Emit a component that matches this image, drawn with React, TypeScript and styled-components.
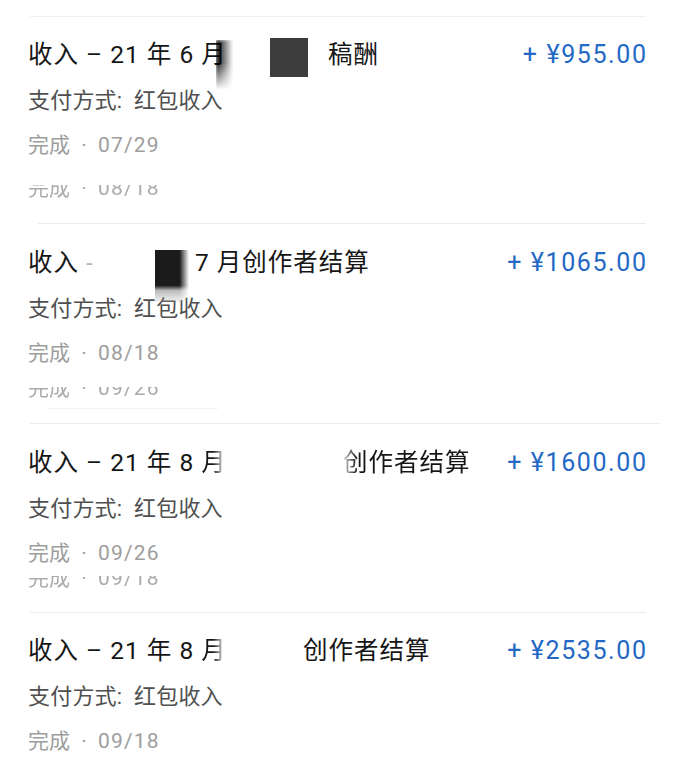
import React from "react";
import styled, { createGlobalStyle } from "styled-components";

const Global = createGlobalStyle`
  html, body { margin: 0; padding: 0; background: #ffffff; }
  body {
    font-family: Roboto, "Noto Sans CJK SC", "Noto Sans", sans-serif;
    -webkit-font-smoothing: antialiased;
  }
`;

const Page = styled.div`
  width: 674px;
  height: 771px;
  overflow: hidden;
  box-sizing: border-box;
  padding: 0 28px;
  display: flex;
  flex-direction: column;
  background: #fff;
`;

const Divider = styled.div<{ $mt: number; $l?: number; $r?: number; $c?: string }>`
  height: 1px;
  flex: none;
  margin-top: ${(p) => p.$mt}px;
  margin-left: ${(p) => p.$l ?? 2}px;
  margin-right: ${(p) => p.$r ?? 0}px;
  background: ${(p) => p.$c ?? "#ececec"};
`;

const Record = styled.div<{ $mt: number }>`
  display: flex;
  flex-direction: column;
  gap: 14px;
  margin-top: ${(p) => p.$mt}px;
  flex: none;
`;

const TitleRow = styled.div`
  position: relative;
  display: flex;
  align-items: center;
  height: 34px;
  font-size: 24.5px;
  line-height: 34px;
  color: #161616;
  white-space: pre;
`;

const Seg = styled.span<{ $w?: number; $fadeLeft?: boolean }>`
  display: inline-block;
  flex: none;
  letter-spacing: 1px;
  width: ${(p) => (p.$w ? `${p.$w}px` : "auto")};
  ${(p) =>
    p.$fadeLeft
      ? `-webkit-mask-image: linear-gradient(to right, rgba(0,0,0,0.15) 0px, #000 14px);
         mask-image: linear-gradient(to right, rgba(0,0,0,0.15) 0px, #000 14px);`
      : ""}
`;

const CutChar = styled.span`
  display: inline-block;
  -webkit-mask-image: linear-gradient(to right, #000 45%, transparent 95%);
  mask-image: linear-gradient(to right, #000 45%, transparent 95%);
`;

const Faded = styled.span`
  color: #b9b9b9;
`;

const Amount = styled.span`
  margin-left: auto;
  margin-right: -1.6px;
  color: #2468c6;
  font-size: 25px;
  letter-spacing: 1.6px;
`;

const Smear = styled.div<{ $x: number }>`
  position: absolute;
  left: ${(p) => p.$x}px;
  top: 2px;
  width: 17px;
  height: 50px;
  background: linear-gradient(to right, rgba(0, 0, 0, 0.95) 0%, rgba(0, 0, 0, 0.55) 45%, rgba(0, 0, 0, 0) 100%);
  -webkit-mask-image: linear-gradient(to bottom, #000 0%, #000 45%, transparent 100%);
  mask-image: linear-gradient(to bottom, #000 0%, #000 45%, transparent 100%);
  filter: blur(1.5px);
`;

const RedactBox = styled.div<{ $x: number; $y: number; $w: number; $h: number; $c: string }>`
  position: absolute;
  left: ${(p) => p.$x}px;
  top: ${(p) => p.$y}px;
  width: ${(p) => p.$w}px;
  height: ${(p) => p.$h}px;
  background: ${(p) => p.$c};
`;

const SoftRedact = styled.div<{ $x: number; $y: number }>`
  position: absolute;
  left: ${(p) => p.$x}px;
  top: ${(p) => p.$y}px;
  width: 34px;
  height: 52px;
  background: linear-gradient(
    to bottom,
    #1b1b1b 0%,
    #1b1b1b 68%,
    rgba(60, 60, 60, 0.35) 78%,
    rgba(200, 200, 200, 0.2) 100%
  );
  -webkit-mask-image: linear-gradient(to right, #000 0%, #000 72%, transparent 100%);
  mask-image: linear-gradient(to right, #000 0%, #000 72%, transparent 100%);
`;

const Sub = styled.div`
  height: 30px;
  line-height: 30px;
  font-size: 22px;
  color: #4f4f4f;
  white-space: pre;
  letter-spacing: 0.2px;
`;

const Colon = styled.span`
  margin-right: 6px;
`;

const DateLine = styled.div`
  height: 30px;
  line-height: 30px;
  font-size: 21px;
  color: #9d9d9d;
  white-space: pre;
`;

const Dot = styled.span`
  margin: 0 6px;
`;

const Num = styled.span`
  letter-spacing: 1.2px;
`;

const Fragment = styled.div<{ $mt: number; $h: number }>`
  flex: none;
  margin-top: ${(p) => p.$mt}px;
  height: ${(p) => p.$h}px;
  overflow: hidden;
  opacity: 0.85;
`;

const FragmentInner = styled(DateLine)<{ $shift: number }>`
  margin-top: ${(p) => -p.$shift}px;
`;

type Item = {
  mt: number;
  title: React.ReactNode;
  amount: string;
  date: string;
};

const items: Item[] = [
  {
    mt: 21,
    amount: "+ ¥955.00",
    date: "07/29",
    title: (
      <>
        <Seg $w={300}>收入 – 21 年 6 月</Seg>
        <Seg>稿酬</Seg>
        <Smear $x={188} />
        <RedactBox $x={242} $y={0} $w={38} $h={39} $c="#3d3d3d" />
      </>
    ),
  },
  {
    mt: 22,
    amount: "+ ¥1065.00",
    date: "08/18",
    title: (
      <>
        <Seg $w={167}>
          收入 <Faded>-</Faded>
        </Seg>
        <Seg>7 月创作者结算</Seg>
        <SoftRedact $x={127} $y={4} />
      </>
    ),
  },
  {
    mt: 22,
    amount: "+ ¥1600.00",
    date: "09/26",
    title: (
      <>
        <Seg $w={315}>
          收入 – 21 年 8 <CutChar>月</CutChar>
        </Seg>
        <Seg $fadeLeft>创作者结算</Seg>
      </>
    ),
  },
  {
    mt: 21,
    amount: "+ ¥2535.00",
    date: "09/18",
    title: (
      <>
        <Seg $w={275}>
          收入 – 21 年 8 <CutChar>月</CutChar>
        </Seg>
        <Seg>创作者结算</Seg>
      </>
    ),
  },
];

const DateText: React.FC<{ date: string }> = ({ date }) => (
  <>
    完成 <Dot>·</Dot> <Num>{date}</Num>
  </>
);

const RecordView: React.FC<{ item: Item }> = ({ item }) => (
  <Record $mt={item.mt}>
    <TitleRow>
      {item.title}
      <Amount>{item.amount}</Amount>
    </TitleRow>
    <Sub>
      支付方式<Colon>:</Colon> 红包收入
    </Sub>
    <DateLine>
      <DateText date={item.date} />
    </DateLine>
  </Record>
);

export default function App() {
  return (
    <>
      <Global />
      <Page>
        <Divider $mt={16} $c="#f0f0f0" />
        <RecordView item={items[0]} />
        <Fragment $mt={25} $h={14}>
          <FragmentInner $shift={12}>
            <DateText date="08/18" />
          </FragmentInner>
        </Fragment>
        <Divider $mt={24} $l={10} />
        <RecordView item={items[1]} />
        <Fragment $mt={19} $h={12}>
          <FragmentInner $shift={14}>
            <DateText date="09/26" />
          </FragmentInner>
        </Fragment>
        <Divider $mt={9} $l={20} $r={428} $c="#f3f3f3" />
        <Divider $mt={14} $l={2} $r={-14} />
        <RecordView item={items[2]} />
        <Fragment $mt={8} $h={12}>
          <FragmentInner $shift={13}>
            <DateText date="09/18" />
          </FragmentInner>
        </Fragment>
        <Divider $mt={24} $l={2} />
        <RecordView item={items[3]} />
      </Page>
    </>
  );
}
